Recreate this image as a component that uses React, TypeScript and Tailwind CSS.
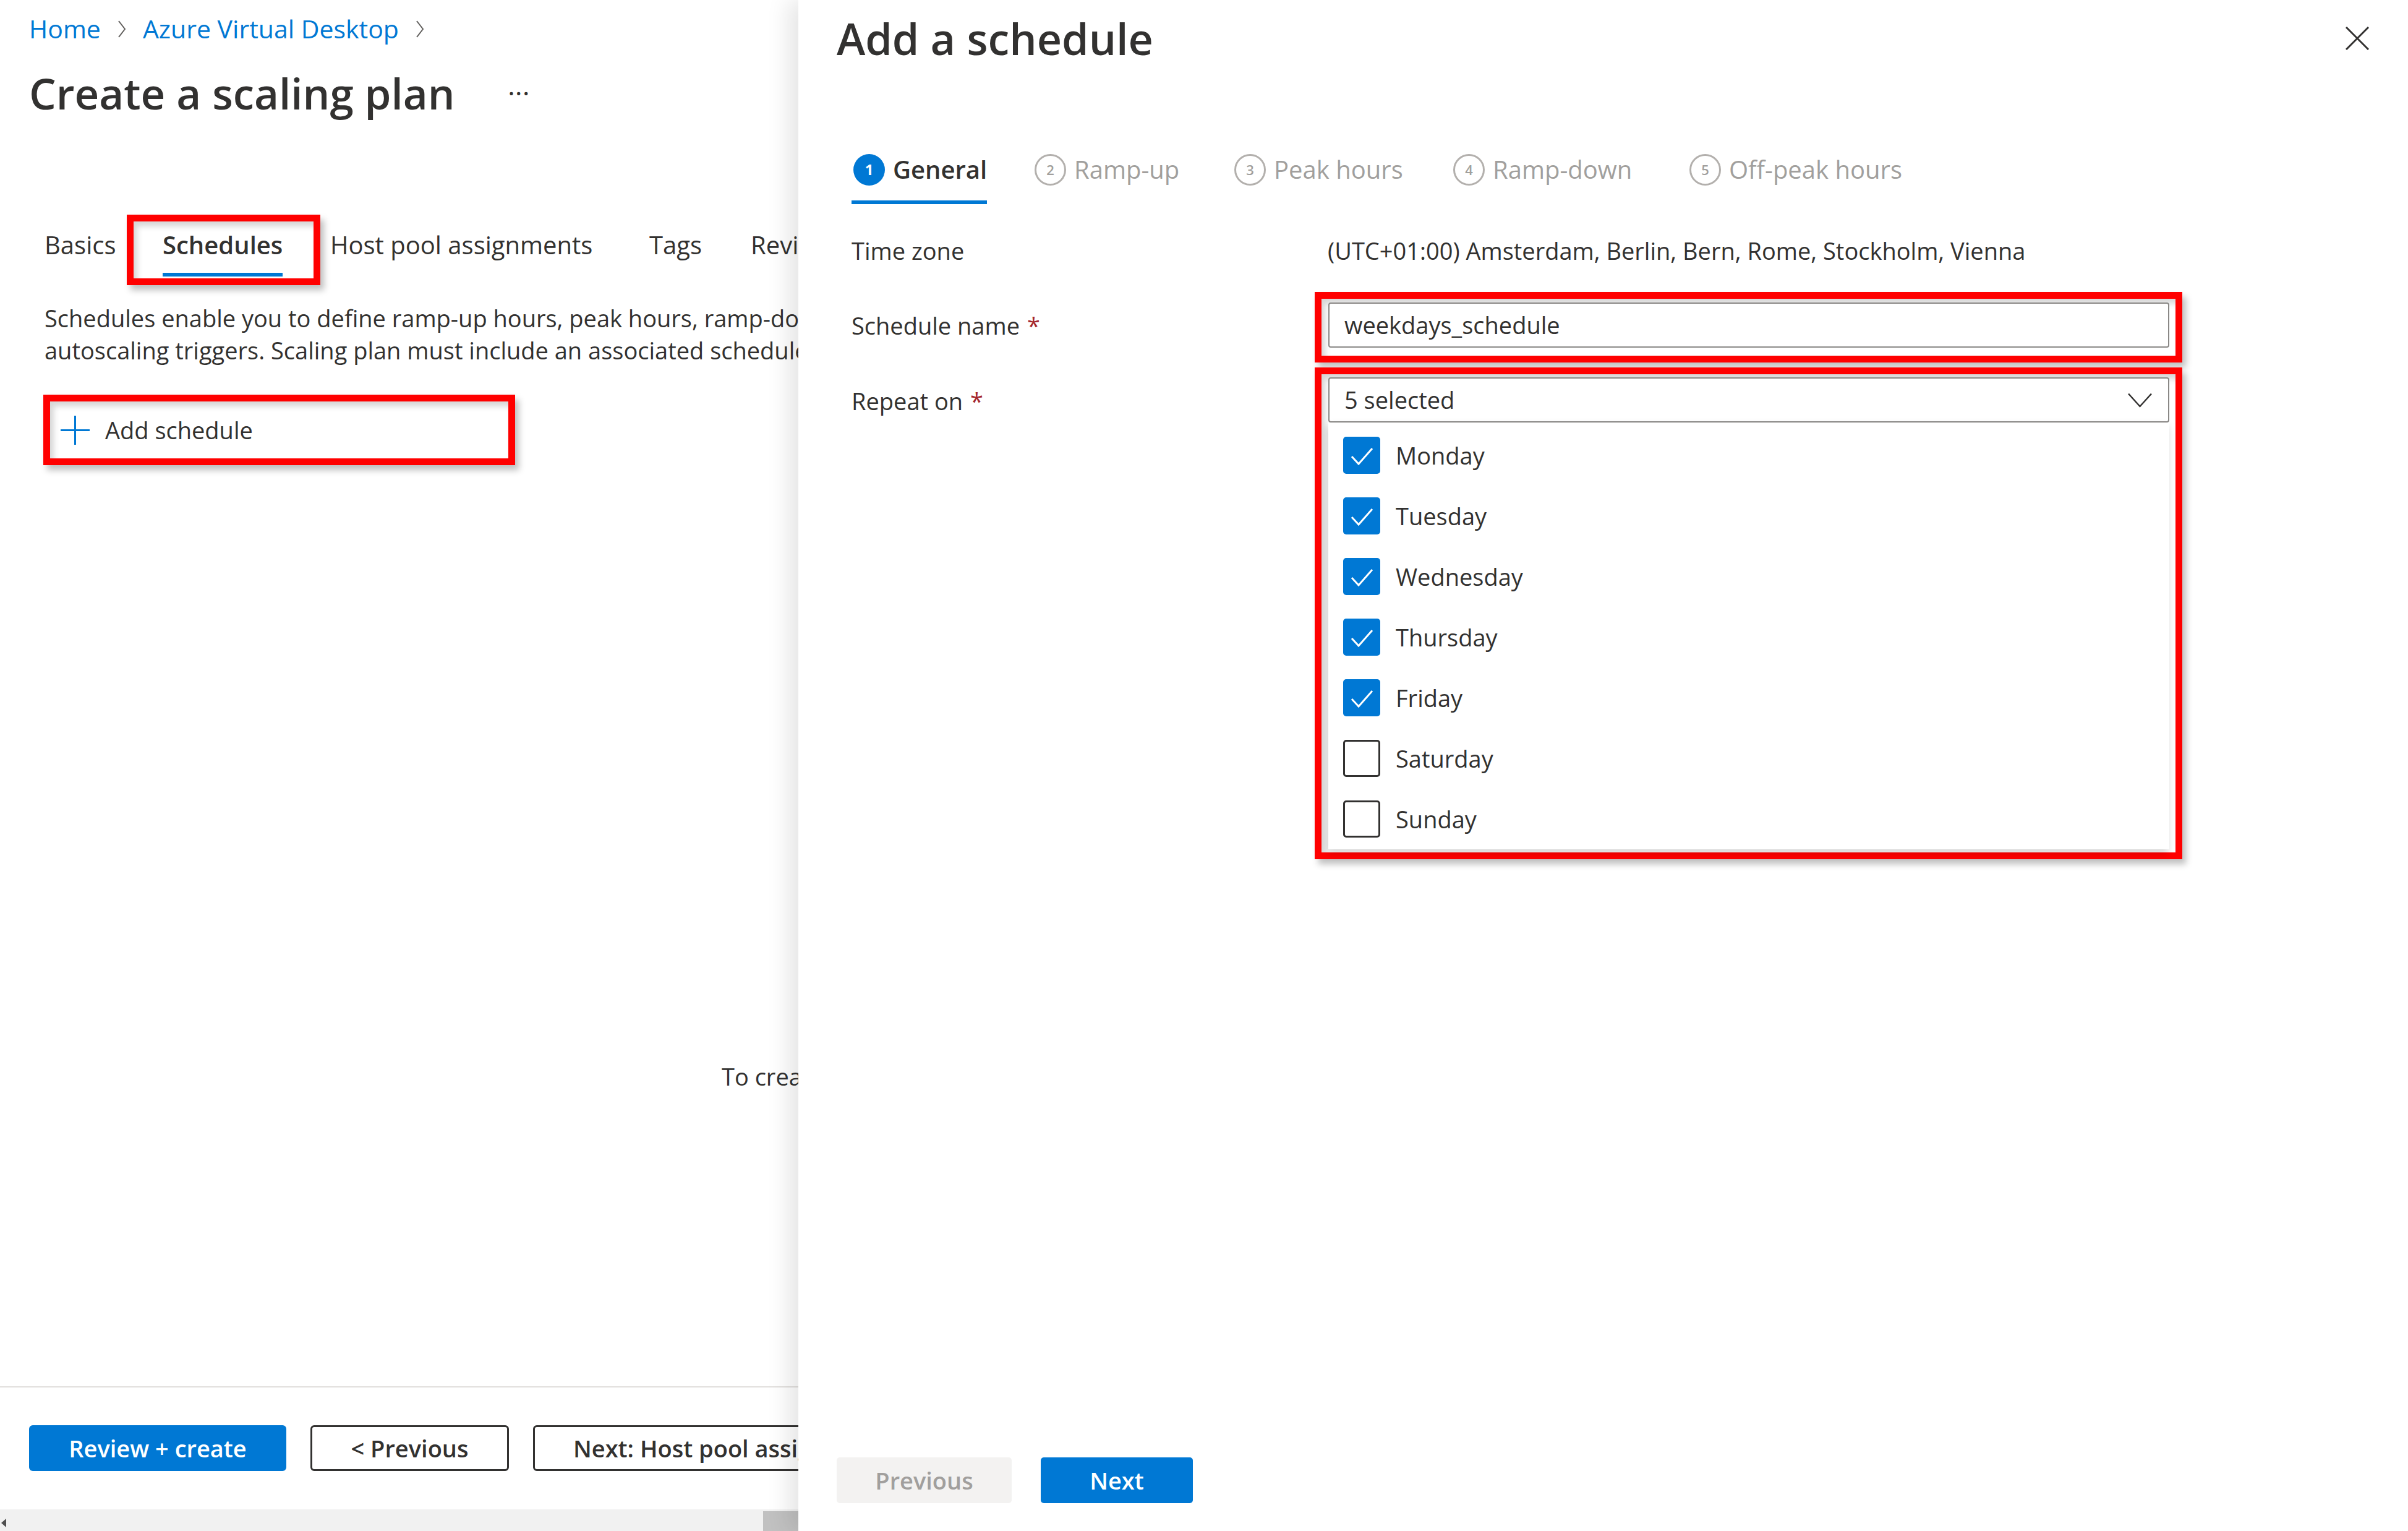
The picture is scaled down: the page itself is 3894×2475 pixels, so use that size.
import React from "react";

const days = [
    { name: "Monday", checked: true },
    { name: "Tuesday", checked: true },
    { name: "Wednesday", checked: true },
    { name: "Thursday", checked: true },
    { name: "Friday", checked: true },
    { name: "Saturday", checked: false },
    { name: "Sunday", checked: false },
];

const steps = [
    { n: "1", label: "General", w: "w-[293px]" },
    { n: "2", label: "Ramp-up", w: "w-[323px]" },
    { n: "3", label: "Peak hours", w: "w-[354px]" },
    { n: "4", label: "Ramp-down", w: "w-[382px]" },
    { n: "5", label: "Off-peak hours", w: "w-[400px]" },
];

const redBox =
    "border-[11px] border-[#ff0000] shadow-[6px_8px_10px_rgba(0,0,0,0.25),inset_6px_8px_10px_rgba(0,0,0,0.16)]";

const Crumb = () => (
    <svg width="14" height="30" viewBox="0 0 14 30" fill="none">
        <path d="M2 2 L12 15 L2 28" stroke="#605e5c" strokeWidth="2" />
    </svg>
);

const Check = () => (
    <svg width="60" height="60" viewBox="0 0 60 60" fill="none">
        <path d="M14 32 L25 44 L47 19" stroke="#ffffff" strokeWidth="3" />
    </svg>
);

// page behind the panel, its right part is covered by the panel
const LeftPage = () => {
    return (
        <div className="flex h-full w-[1291px] shrink-0 flex-col overflow-hidden">
            <div className="flex-1">
                <div className="flex h-[94px] items-center gap-[27px] pl-[47px] text-[41px] text-[#0078d4]">
                    <span>Home</span>
                    <Crumb />
                    <span>Azure Virtual Desktop</span>
                    <Crumb />
                </div>

                <div className="flex h-[114px] items-center pl-[47px]">
                    <h1 className="w-[775px] shrink-0 text-[69px] font-semibold text-[#323130]">Create a scaling plan</h1>
                    <span className="text-[36px] font-semibold tracking-[2px] text-[#323130]">···</span>
                </div>

                <div className="mt-[142px] flex h-[97px] whitespace-nowrap pl-[72px] text-[40px]">
                    <div className="w-[191px] flex-none">
                        <div className="flex h-[91px] items-center">Basics</div>
                    </div>
                    <div className="relative w-[271px] flex-none">
                        <div className={`absolute left-[-58px] top-[-3px] h-[114px] w-[313px] ${redBox}`} />
                        <div className="inline-flex flex-col">
                            <div className="flex h-[91px] items-center font-semibold">Schedules</div>
                            <div className="h-[6px] bg-[#0078d4]" />
                        </div>
                    </div>
                    <div className="w-[516px] flex-none">
                        <div className="flex h-[91px] items-center">Host pool assignments</div>
                    </div>
                    <div className="w-[164px] flex-none">
                        <div className="flex h-[91px] items-center">Tags</div>
                    </div>
                    <div className="w-[77px] flex-none overflow-hidden">
                        <div className="flex h-[91px] items-center">Review</div>
                    </div>
                </div>

                <p className="mt-[41px] whitespace-nowrap pl-[72px] text-[38px] leading-[52px]">
                    Schedules enable you to define ramp-up hours, peak hours, ramp-down
                    <br />
                    autoscaling triggers. Scaling plan must include an associated schedule
                </p>

                <div className={`ml-[70px] mt-[46px] flex h-[114px] w-[763px] items-center gap-[25px] pl-[17px] ${redBox}`}>
                    <svg width="47" height="47" viewBox="0 0 47 47" fill="none">
                        <path d="M23.5 0 V47 M0 23.5 H47" stroke="#0078d4" strokeWidth="3" />
                    </svg>
                    <span className="text-[38px]">Add schedule</span>
                </div>

                <p className="mt-[962px] whitespace-nowrap pl-[1167px] text-[38px] leading-[52px]">To create</p>
            </div>

            <div className="border-t-2 border-[#e1dfdd]">
                <div className="flex gap-[39px] whitespace-nowrap pl-[47px] pt-[61px] text-[38px] font-semibold">
                    <button className="flex h-[74px] w-[416px] shrink-0 items-center justify-center rounded-[6px] bg-[#0078d4] text-white">
                        Review + create
                    </button>
                    <button className="flex h-[74px] w-[321px] shrink-0 items-center justify-center rounded-[6px] border-[3px] border-[#323130] bg-white">
                        &lt; Previous
                    </button>
                    <button className="flex h-[74px] w-[480px] shrink-0 items-center rounded-[6px] border-[3px] border-[#323130] bg-white pl-[62px]">
                        Next: Host pool assign
                    </button>
                </div>
                <div className="mt-[62px] flex h-[35px] items-end justify-between bg-[#f1f1f1]">
                    <svg width="17" height="35" viewBox="0 0 17 35">
                        <path d="M2 22 L10 15 L10 29 Z" fill="#505050" />
                    </svg>
                    <div className="h-[32px] w-[57px] bg-[#c1c1c1]" />
                </div>
            </div>
        </div>
    );
};

const SchedulePanel = () => {
    return (
        <div className="relative z-10 flex h-full flex-1 flex-col bg-white shadow-[-16px_0_34px_rgba(0,0,0,0.1)]">
            <div className="flex h-[124px] items-center justify-between pl-[62px] pr-[63px]">
                <h2 className="text-[70px] font-semibold">Add a schedule</h2>
                <svg width="38" height="38" viewBox="0 0 38 38" fill="none">
                    <path d="M1 1 L37 37 M37 1 L1 37" stroke="#323130" strokeWidth="3" />
                </svg>
            </div>

            <div className="mt-[100px] flex whitespace-nowrap pl-[86px] text-[40px]">
                {steps.map((s, i) => (
                    <div key={s.n} className={`${s.w} flex-none`}>
                        <div className="inline-flex flex-col">
                            <div className="flex h-[100px] items-center gap-[13px] pl-[3px]">
                                {i === 0 ? (
                                    <span className="flex h-[51px] w-[51px] items-center justify-center rounded-full bg-[#0078d4] text-[24px] font-bold text-white">
                                        {s.n}
                                    </span>
                                ) : (
                                    <span className="flex h-[51px] w-[51px] items-center justify-center rounded-full border-[3px] border-[#b3b0ad] text-[22px] font-semibold text-[#a19f9d]">
                                        {s.n}
                                    </span>
                                )}
                                <span className={i === 0 ? "font-semibold text-[#323130]" : "text-[#a19f9d]"}>{s.label}</span>
                            </div>
                            {i === 0 && <div className="h-[6px] bg-[#0078d4]" />}
                        </div>
                    </div>
                ))}
            </div>

            <div className="text-[38px]">
                <div className="mt-[40px] flex h-[70px] items-center pl-[86px]">
                    <div className="w-[749px] flex-none">Time zone</div>
                    <div className="pl-[21px]">(UTC+01:00) Amsterdam, Berlin, Bern, Rome, Stockholm, Vienna</div>
                </div>

                <div className="mt-[32px] flex pl-[86px]">
                    <div className="flex h-[108px] w-[749px] flex-none items-center gap-[12px]">
                        <span>Schedule name</span>
                        <span className="text-[#a4262c]">*</span>
                    </div>
                    <div className={`h-[114px] w-[1403px] flex-none pl-[11px] pr-[10px] pt-[6px] ${redBox}`}>
                        <div className="flex h-[73px] items-center rounded-[4px] border-2 border-[#8a8886] bg-white pl-[24px]">
                            weekdays_schedule
                        </div>
                    </div>
                </div>

                <div className="mt-[8px] flex pl-[86px]">
                    <div className="flex h-[108px] w-[749px] flex-none items-center gap-[12px]">
                        <span>Repeat on</span>
                        <span className="text-[#a4262c]">*</span>
                    </div>
                    <div className={`w-[1403px] flex-none pb-[5px] pl-[11px] pr-[10px] pt-[5px] ${redBox}`}>
                        <div className="flex h-[73px] items-center justify-between rounded-[4px] border-2 border-[#8a8886] bg-white pl-[24px] pr-[26px]">
                            <span>5 selected</span>
                            <svg width="39" height="24" viewBox="0 0 39 24" fill="none">
                                <path d="M1 1.5 L19.5 22 L38 1.5" stroke="#323130" strokeWidth="2.5" />
                            </svg>
                        </div>
                        <div className="bg-white pt-[4px] shadow-[-2px_6px_12px_rgba(0,0,0,0.18)]">
                            {days.map((d) => (
                                <div key={d.name} className="flex h-[98px] items-center gap-[25px] pl-[24px]">
                                    {d.checked ? (
                                        <span className="flex h-[60px] w-[60px] items-center justify-center rounded-[5px] bg-[#0078d4]">
                                            <Check />
                                        </span>
                                    ) : (
                                        <span className="h-[60px] w-[60px] rounded-[5px] border-[3px] border-[#323130] bg-white" />
                                    )}
                                    <span>{d.name}</span>
                                </div>
                            ))}
                        </div>
                    </div>
                </div>
            </div>

            <div className="mt-auto flex gap-[47px] pb-[45px] pl-[62px] text-[38px] font-semibold">
                <button className="flex h-[74px] w-[283px] items-center justify-center rounded-[5px] bg-[#f3f2f1] text-[#a19f9d]">
                    Previous
                </button>
                <button className="flex h-[74px] w-[246px] items-center justify-center rounded-[5px] bg-[#0078d4] text-white">
                    Next
                </button>
            </div>
        </div>
    );
};

export default function App() {
    return (
        <div className="flex h-[2475px] w-[3894px] overflow-hidden bg-white font-['Open_Sans',sans-serif] text-[#323130]">
            <LeftPage />
            <SchedulePanel />
        </div>
    );
}
